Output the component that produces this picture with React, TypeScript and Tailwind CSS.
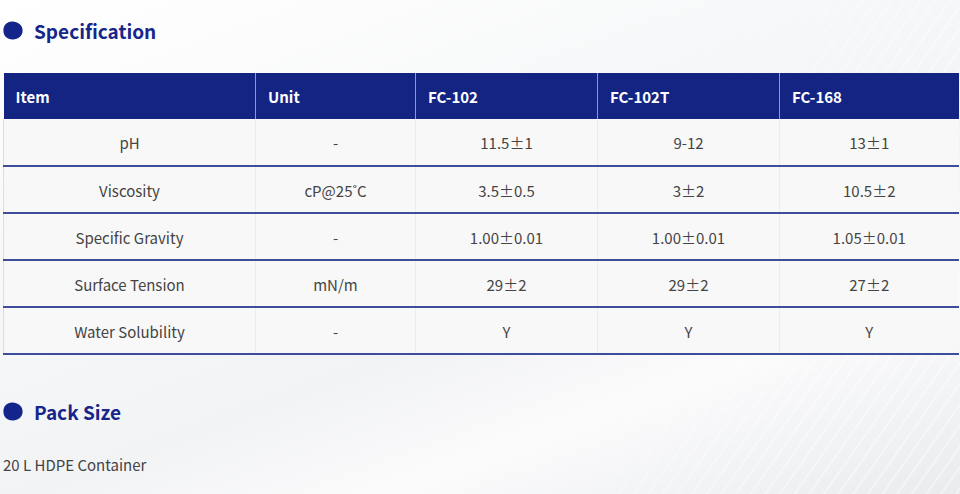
import React from 'react';

const rows: string[][] = [
    ['pH', '-', '11.5±1', '9-12', '13±1'],
    ['Viscosity', 'cP@25˚C', '3.5±0.5', '3±2', '10.5±2'],
    ['Specific Gravity', '-', '1.00±0.01', '1.00±0.01', '1.05±0.01'],
    ['Surface Tension', 'mN/m', '29±2', '29±2', '27±2'],
    ['Water Solubility', '-', 'Y', 'Y', 'Y'],
];

const heads = ['Item', 'Unit', 'FC-102', 'FC-102T', 'FC-168'];
const widths = ['w-[252px]', 'w-[160px]', 'w-[182px]', 'w-[182px]', 'w-[179px]'];

const Blob = () => (
    <svg className="w-[20px] h-[19px] mr-[11px]" viewBox="0 0 20 19">
        <path d="M9 0.5C14.5 0.3 19.6 3.8 19.6 9.6C19.6 15.4 15 18.6 9.6 18.5C4 18.4 0.4 15.2 0.4 9.5C0.4 3.8 4 0.7 9 0.5Z" fill="#13248a"/>
    </svg>
);

const Heading: React.FC<{ title: string }> = ({ title }) => (
    <div className="flex items-center pl-[3px]">
        <Blob/>
        <h2 className="text-[19px] font-bold text-[#16268a] leading-none">{title}</h2>
    </div>
);

const App: React.FC = () => {
    return (
        <div
            className="w-[960px] h-[494px] overflow-hidden relative bg-[linear-gradient(160deg,#ffffff_0%,#f7f8f9_35%,#f2f3f5_60%,#fbfbfc_75%,#e9ebee_100%)]"
            style={{ fontFamily: '"Noto Sans CJK JP", "Noto Sans", sans-serif' }}
        >
            <div className="absolute inset-0 opacity-60 bg-[repeating-linear-gradient(125deg,transparent_0px,transparent_9px,rgba(255,255,255,0.9)_10px,transparent_12px)] [mask-image:linear-gradient(110deg,transparent_55%,black_85%)]"/>
            <div className="relative pt-[21px]">
                <Heading title="Specification"/>
                <table className="mt-[33px] ml-[3px] border-collapse table-fixed w-[955px] text-[15px]">
                    <thead>
                        <tr className="bg-[#132482] h-[46px]">
                            {heads.map((h, i) => (
                                <th
                                    key={h}
                                    className={`${widths[i]} text-left text-white font-bold px-[12px] pt-[2px] border-l border-[#8e97c7] first:border-l-0`}
                                >
                                    {h}
                                </th>
                            ))}
                        </tr>
                    </thead>
                    <tbody>
                        {rows.map((r) => (
                            <tr key={r[0]} className="bg-[#f8f8f8] h-[47px] border-b-[2px] border-[#3d4d9c]">
                                {r.map((c, i) => (
                                    <td key={i} className="text-center text-[#444444] pt-[3px] border-l border-[#ececec] first:border-l-[#dddddd]">
                                        {c}
                                    </td>
                                ))}
                            </tr>
                        ))}
                    </tbody>
                </table>
                <div className="mt-[47px]">
                    <Heading title="Pack Size"/>
                </div>
                <p className="mt-[33px] pl-[3px] text-[15px] text-[#444444]">20 L HDPE Container</p>
            </div>
        </div>
    );
};

export default App;
